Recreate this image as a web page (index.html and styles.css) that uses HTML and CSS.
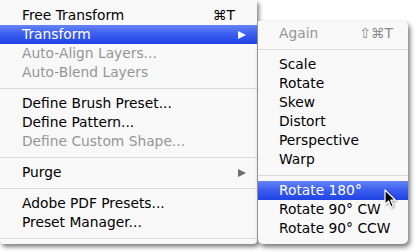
FILE: index.html
```html
<!DOCTYPE html>
<html lang="en">
<head>
    <meta charset="UTF-8">
    <meta name="viewport" content="width=device-width, initial-scale=1.0">
    <title>Transform menu</title>
    <link rel="stylesheet" href="styles.css">
</head>
<body>
    <div class="scene">
        <ul class="menu main">
            <li class="item"><span class="label">Free Transform</span><span class="key">⌘T</span></li>
            <li class="item active"><span class="label">Transform</span><span class="arrow"></span></li>
            <li class="item off"><span class="label">Auto-Align Layers...</span></li>
            <li class="item off"><span class="label">Auto-Blend Layers</span></li>
            <li class="sep"></li>
            <li class="item"><span class="label">Define Brush Preset...</span></li>
            <li class="item"><span class="label">Define Pattern...</span></li>
            <li class="item off"><span class="label">Define Custom Shape...</span></li>
            <li class="sep"></li>
            <li class="item"><span class="label">Purge</span><span class="arrow"></span></li>
            <li class="sep"></li>
            <li class="item"><span class="label">Adobe PDF Presets...</span></li>
            <li class="item"><span class="label">Preset Manager...</span></li>
            <li class="sep"></li>
        </ul>

        <ul class="menu sub">
            <li class="item off"><span class="label">Again</span><span class="key">⇧⌘T</span></li>
            <li class="sep"></li>
            <li class="item"><span class="label">Scale</span></li>
            <li class="item"><span class="label">Rotate</span></li>
            <li class="item"><span class="label">Skew</span></li>
            <li class="item"><span class="label">Distort</span></li>
            <li class="item"><span class="label">Perspective</span></li>
            <li class="item"><span class="label">Warp</span></li>
            <li class="sep"></li>
            <li class="item active"><span class="label">Rotate 180°</span></li>
            <li class="item"><span class="label">Rotate 90° CW</span></li>
            <li class="item"><span class="label">Rotate 90° CCW</span></li>
        </ul>

        <svg class="cursor" width="14" height="20" viewBox="0 0 14 20">
            <path d="M1 1 L1 15.5 L4.5 12 L7 18 L9.3 17 L6.8 11.2 L11.5 11.2 Z" fill="#000" stroke="#fff" stroke-width="1.2" stroke-linejoin="round"/>
        </svg>
    </div>
</body>
</html>
```

FILE: styles.css
```css
body{
    margin:0;
    background:#fff;
    font-family:"DejaVu Sans", sans-serif;
    font-size:13.8px;
    color:#000;
}

.scene{
    position:relative;
    display:flex;
    align-items:flex-start;
    width:416px;
    height:252px;
    overflow:hidden;
}

.menu{
    list-style:none;
    margin:0;
    background:#f8f8f8;
}

.main{
    width:257px;
    padding:6px 0 0;
    border-radius:0 0 4px 4px;
    box-shadow:2px 3px 4px rgba(0,0,0,0.5);
}

.sub{
    width:150px;
    margin:21px 0 0 1px;
    padding:3px 0 6px;
    border-radius:0 5px 5px 5px;
    box-shadow:2px 3px 5px rgba(0,0,0,0.55);
}

.item{
    display:flex;
    align-items:center;
    height:19px;
    line-height:19px;
    padding:0 11px 0 22px;
    white-space:nowrap;
}
.sub .item{
    padding:0 15px 0 21px;
}

.label{
    flex:1;
}

.off{
    color:#959595;
}

.active{
    color:#fff;
    background:linear-gradient(#6584f4, #3a5cef 50%, #1f43e4);
}

.key{
    margin-right:11px;
}
.sub .key{
    margin-right:0;
    color:#8a8a8a;
}

.arrow{
    width:0;
    height:0;
    border-left:8px solid #000;
    border-top:4.5px solid transparent;
    border-bottom:4.5px solid transparent;
}
.active .arrow{
    border-left-color:#fff;
}
.item:not(.active) .arrow{
    border-left-color:#6e6e6e;
}

.sep{
    height:1px;
    margin:6px 0 5px;
    background:#d9d9d9;
}

.cursor{
    position:absolute;
    left:384px;
    top:189px;
    filter:drop-shadow(1px 1px 1px rgba(0,0,0,0.35));
}
```
